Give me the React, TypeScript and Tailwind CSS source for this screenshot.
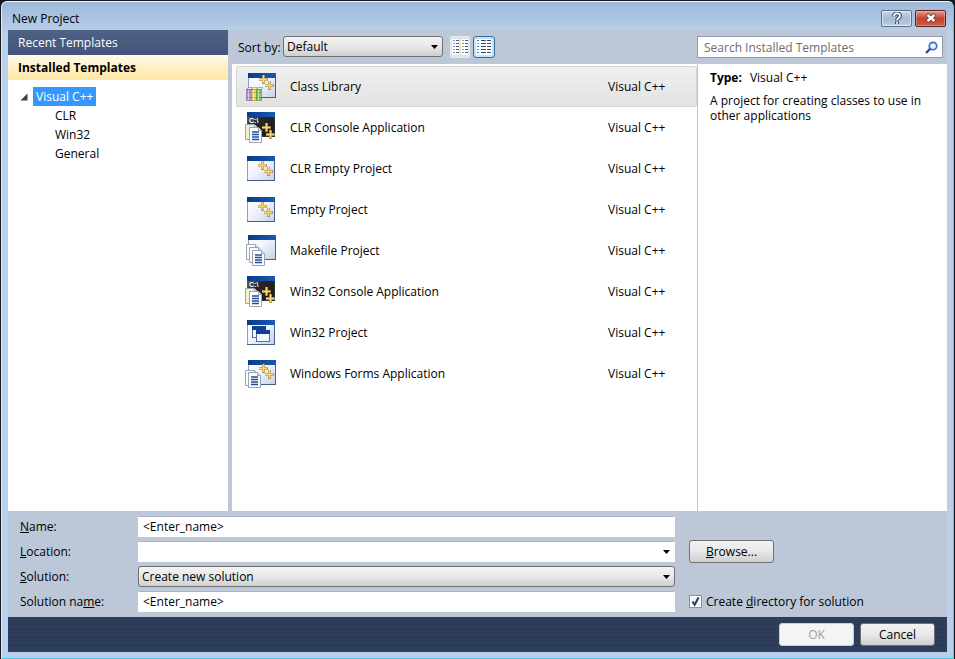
import { useState } from 'react'
import type { ReactNode } from 'react'

// ── Data ────────────────────────────────────────────────────────────────────

type IconKind = 'library' | 'console' | 'empty' | 'makefile' | 'win32' | 'forms'

interface Template {
  name: string
  language: string
  icon: IconKind
}

const TEMPLATES: Template[] = [
  { name: 'Class Library', language: 'Visual C++', icon: 'library' },
  { name: 'CLR Console Application', language: 'Visual C++', icon: 'console' },
  { name: 'CLR Empty Project', language: 'Visual C++', icon: 'empty' },
  { name: 'Empty Project', language: 'Visual C++', icon: 'empty' },
  { name: 'Makefile Project', language: 'Visual C++', icon: 'makefile' },
  { name: 'Win32 Console Application', language: 'Visual C++', icon: 'console' },
  { name: 'Win32 Project', language: 'Visual C++', icon: 'win32' },
  { name: 'Windows Forms Application', language: 'Visual C++', icon: 'forms' },
]

const TREE_CHILDREN = ['CLR', 'Win32', 'General']

// ── Template icons ──────────────────────────────────────────────────────────

function WindowShape({ x, y, dark = false }: { x: number; y: number; dark?: boolean }) {
  return (
    <g transform={`translate(${x} ${y})`}>
      <rect x="0.5" y="0.5" width="27" height="24" fill={dark ? 'url(#console-body)' : 'url(#win-body)'} stroke={dark ? '#555' : '#8ba0c4'} />
      <rect width="28" height="5" fill="url(#win-title)" />
      <path d="M27.5 5v20M0 24.5h28" stroke={dark ? '#333' : '#4a5f88'} />
    </g>
  )
}

function Plus({ x, y }: { x: number; y: number }) {
  return (
    <g transform={`translate(${x} ${y})`}>
      <path d="M.5-4v9M-4 .5h9" stroke="#b08a48" strokeWidth="2.600" />
      <path d="M.5-4v8M-4 .5h8" stroke="#fbd970" strokeWidth="1.400" />
    </g>
  )
}

function Page({ x, y, lines = false, tint = '#fff' }: { x: number; y: number; lines?: boolean; tint?: string }) {
  return (
    <g transform={`translate(${x} ${y})`}>
      <path d="M.5.5h9l3 3v12H.5z" fill={tint} stroke="#98a3b6" />
      <path d="M9.500.5v3h3" fill="#dce5f2" stroke="#98a3b6" />
      {lines && <path d="M3 5h7M3 7.500h7M3 10h7M3 12.500h7" stroke="#1f4f9c" strokeWidth="1.300" />}
    </g>
  )
}

function Book({ x, y, fill, edge }: { x: number; y: number; fill: string; edge: string }) {
  return (
    <g transform={`translate(${x} ${y})`}>
      <path d="M.5 2.500l2-2h4l-1 2z" fill="#eef0e4" stroke={edge} strokeOpacity=".5" />
      <path d="M.5 2.500h5v11h-5z" fill={fill} stroke={edge} strokeOpacity=".5" />
      <path d="M1 5.500h4M1 10.500h4" stroke={edge} strokeOpacity=".5" />
      <path d="M2.500 3v10" stroke="#fff" strokeOpacity=".5" />
    </g>
  )
}

function MiniWindow({ x, y }: { x: number; y: number }) {
  return (
    <g transform={`translate(${x} ${y})`}>
      <rect x=".5" y=".5" width="13" height="11" fill="#f3f6fd" stroke="#5070a8" />
      <rect width="14" height="4" fill="#123f92" />
    </g>
  )
}

const ICONS: Record<IconKind, ReactNode> = {
  library: (
    <>
      <WindowShape x={3} y={2} />
      <Plus x={18} y={8} />
      <Plus x={24} y={14} />
      <Book x={1} y={16} fill="#b497dc" edge="#6b3fa0" />
      <Book x={6} y={16} fill="#ead66a" edge="#94781c" />
      <Book x={11} y={16} fill="#86cc5a" edge="#3f8427" />
    </>
  ),
  console: (
    <>
      <WindowShape x={2} y={0} dark />
      <text x="4" y="11" fontSize="7" fontWeight="bold" fill="#fff" fontFamily="Liberation Sans, sans-serif">C:\</text>
      <Plus x={21} y={15} />
      <Plus x={25} y={22} />
      <Page x={0} y={12} tint="#f8efcf" />
      <Page x={4} y={15} lines />
    </>
  ),
  empty: (
    <>
      <WindowShape x={2} y={3} />
      <Plus x={17} y={12} />
      <Plus x={23} y={18} />
    </>
  ),
  makefile: (
    <>
      <WindowShape x={3} y={0} />
      <Page x={1} y={9} />
      <Page x={4} y={12} />
      <Page x={7} y={15} lines />
    </>
  ),
  win32: (
    <>
      <WindowShape x={2} y={3} />
      <MiniWindow x={7} y={9} />
      <MiniWindow x={11} y={13} />
    </>
  ),
  forms: (
    <>
      <WindowShape x={3} y={2} />
      <Plus x={18} y={10} />
      <Plus x={24} y={16} />
      <Page x={0} y={12} />
      <Page x={3} y={14} lines />
    </>
  ),
}

function TemplateIcon({ kind }: { kind: IconKind }) {
  return (
    <svg viewBox="0 0 32 32" className="size-8 shrink-0" aria-hidden="true">
      <defs>
        <linearGradient id="win-title" x1="0" x2="1">
          <stop offset="0" stopColor="#0a3a86" />
          <stop offset="1" stopColor="#1a5ab4" />
        </linearGradient>
        <linearGradient id="win-body" x1="0" y1="0" x2="1" y2="1">
          <stop offset="0" stopColor="#ffffff" />
          <stop offset="0.5" stopColor="#eef2fb" />
          <stop offset="1" stopColor="#c4d0ea" />
        </linearGradient>
        <linearGradient id="console-body" x1="0" y1="0" x2="1" y2="1">
          <stop offset="0" stopColor="#6a6a6a" />
          <stop offset="0.4" stopColor="#262626" />
          <stop offset="1" stopColor="#1a1a1a" />
        </linearGradient>
      </defs>
      {ICONS[kind]}
    </svg>
  )
}

// ── Toolbar icons ───────────────────────────────────────────────────────────

function SmallIconsGlyph() {
  return (
    <svg viewBox="0 0 16 16" className="size-4" aria-hidden="true">
      <path d="M0 0h7v16H0zM9 0h7v16H9z" fill="#fff" />
      <path d="M1 1.500h2M1 7.500h2M1 13.500h2M10 4.500h2M10 10.500h2" stroke="#6f8fb8" />
      <path d="M1 4.500h2M1 10.500h2M10 1.500h2M10 7.500h2M10 13.500h2" stroke="#b89c4c" />
      <path d="M4 1.500h3M4 4.500h3M4 7.500h3M4 10.500h3M4 13.500h3M13 1.500h3M13 4.500h3M13 7.500h3M13 10.500h3M13 13.500h3" stroke="#4c5878" />
    </svg>
  )
}

function MediumIconsGlyph() {
  return (
    <svg viewBox="0 0 16 16" className="size-4" aria-hidden="true">
      <path d="M0 0h16v16H0z" fill="#fff" />
      <path d="M1 1.500h2M1 7.500h2M1 13.500h2" stroke="#3f72b8" />
      <path d="M1 4.500h2M1 10.500h2" stroke="#c88a4a" />
      <path d="M5 1.500h5M5 4.500h5M5 7.500h5M5 10.500h5M5 13.500h5M11 1.500h4M11 4.500h4M11 7.500h4M11 10.500h4M11 13.500h4" stroke="#34466e" />
    </svg>
  )
}

// ── Form controls ───────────────────────────────────────────────────────────

const RAISED = 'border border-[#707070] rounded-[3px] bg-linear-to-b from-[#f3f3f3] via-[#e8e8e8] via-50% to-[#cfcfcf]'

interface DropDownProps {
  id: string
  className: string
  options: string[]
}

function DropDown({ id, className, options }: DropDownProps) {
  return (
    <div className="relative">
      <select id={id} className={`block w-full appearance-none outline-none ${className}`}>
        {options.map((option) => (
          <option key={option}>{option}</option>
        ))}
      </select>
      <svg viewBox="0 0 7 4" className="pointer-events-none absolute top-[9px] right-[5px] h-1 w-[7px]" aria-hidden="true">
        <path d="M0 0h7L3.500 4z" fill="#000" />
      </svg>
    </div>
  )
}

const FIELD = 'h-[21px] w-full border border-t-[#a9b4c6] border-x-white border-b-white bg-white px-1 outline-none'

// ── Dialog ──────────────────────────────────────────────────────────────────

export default function App() {
  const [selected, setSelected] = useState(0)

  return (
    <div className="flex min-h-screen bg-[#15181f] pt-px pr-px pl-px font-['Open_Sans','Noto_Sans',sans-serif] text-[12px] leading-[15px] text-black">
      <div className="flex flex-1 flex-col rounded-t-md border border-t-[#eef5fc] border-r-[#45cbe6] border-b-[#45cbe6] border-l-[#e4eefa] bg-linear-to-b from-[#9db8d8] to-[#b9cfea] to-[30px] px-1.5 pb-1.5">
        {/* Title bar */}
        <header className="flex h-7 items-center justify-between pr-px pl-1">
          <h1 className="pt-1">New Project</h1>
          <div className="flex gap-[3px] pt-1">
            <button
              aria-label="Help"
              className="flex h-[17px] w-[31px] items-center justify-center rounded-xs border border-[#5d7089] bg-linear-to-b from-[#c8d8ea] via-[#a5bbd4] via-50% to-[#bcd0e6] inset-ring inset-ring-white/50"
            >
              <svg viewBox="0 0 12 13" className="h-[13px] w-3" aria-hidden="true">
                <path d="M3 4.500c0-4 6-4 6-.5 0 2-3 2-3 4.500M6 9.500v2.500" fill="none" stroke="#3f4a5c" strokeWidth="4" />
                <path d="M3 4.500c0-4 6-4 6-.5 0 2-3 2-3 4.300M6 10v1.800" fill="none" stroke="#fff" strokeWidth="1.800" />
              </svg>
            </button>
            <button
              aria-label="Close"
              className="flex h-[17px] w-[31px] items-center justify-center rounded-xs border border-[#5b1f1c] bg-linear-to-b from-[#e0998c] via-[#c4432f] via-50% to-[#cf5a43] inset-ring inset-ring-white/30"
            >
              <svg viewBox="0 0 12 10" className="h-2.5 w-3" aria-hidden="true">
                <path d="M2 1.500l8 7M10 1.500l-8 7" stroke="#5a3b42" strokeWidth="4" />
                <path d="M2.500 2l7 6M9.500 2l-7 6" stroke="#fff" strokeWidth="2.400" />
              </svg>
            </button>
          </div>
        </header>

        <div className="flex flex-1 flex-col bg-[#bcc7d8]">
          <div className="flex flex-1 gap-1">
            {/* Template categories */}
            <aside className="w-[220px] shrink-0 bg-white">
              <button className="block h-[25px] w-full bg-linear-to-b from-[#4f6185] to-[#43557a] px-2.5 text-left text-white">
                Recent Templates
              </button>
              <button className="block h-[25px] w-full bg-linear-to-b from-[#fffaeb] via-[#fff0c4] via-50% to-[#ffe8a6] px-2.5 text-left font-bold">
                Installed Templates
              </button>
              <ul className="pt-[7px] pl-3">
                <li>
                  <div className="flex items-center gap-[5px]">
                    <svg viewBox="0 0 8 8" className="size-2" aria-hidden="true">
                      <path d="M7.500.5v7h-7z" fill="#404040" />
                    </svg>
                    <button className="h-[19px] bg-[#3399ff] px-[3px] text-white">Visual C++</button>
                  </div>
                  <ul className="pl-8">
                    {TREE_CHILDREN.map((child) => (
                      <li key={child}>
                        <button className="block h-[19px] px-[3px]">{child}</button>
                      </li>
                    ))}
                  </ul>
                </li>
              </ul>
            </aside>

            <div className="flex min-w-0 flex-1 flex-col">
              {/* Sort and search */}
              <div className="flex h-[34px] items-start pt-1.5 pr-1 pl-1.5">
                <label htmlFor="sort" className="w-[45px] leading-6">Sort by:</label>
                <div className="w-40">
                  <DropDown id="sort" options={['Default']} className={`h-[21px] px-[3px] ${RAISED}`} />
                </div>
                <button aria-label="Small icons" className="ml-[7px] flex h-[22px] w-5 items-center justify-center rounded-xs border border-[#e6ebf2] bg-white/50">
                  <SmallIconsGlyph />
                </button>
                <button
                  aria-label="Medium icons"
                  aria-pressed="true"
                  className="ml-[3px] flex size-[22px] items-center justify-center rounded-[3px] border border-[#3a6a96] bg-[#c3e2f7]"
                >
                  <MediumIconsGlyph />
                </button>
                <div className="ml-auto flex h-[22px] w-[246px] items-center border border-[#8e9bb0] bg-white pr-1">
                  <input
                    type="text"
                    aria-label="Search Installed Templates"
                    placeholder="Search Installed Templates"
                    className="min-w-0 flex-1 px-1.5 outline-none placeholder:text-[#6d6d6d]"
                  />
                  <button aria-label="Search">
                    <svg viewBox="0 0 13 13" className="size-[13px]" aria-hidden="true">
                      <circle cx="8" cy="5" r="3.700" fill="#eaf3ff" stroke="#3a6fc4" strokeWidth="1.700" />
                      <path d="M5.300 7.700L1 12" stroke="#2a4f9c" strokeWidth="2.400" />
                    </svg>
                  </button>
                </div>
              </div>

              <div className="flex flex-1 bg-white">
                {/* Template list */}
                <ul className="min-w-0 flex-1 pt-0.5 pl-1">
                  {TEMPLATES.map((template, i) => (
                    <li key={template.name}>
                      <button
                        onClick={() => setSelected(i)}
                        className={`flex h-[41px] w-full items-center border pl-2 text-left ${
                          i === selected
                            ? 'rounded-xs border-[#d4d4d4] bg-linear-to-b from-[#f0f0f0] to-[#e2e2e2]'
                            : 'border-transparent'
                        }`}
                      >
                        <TemplateIcon kind={template.icon} />
                        <span className="flex-1 pl-[13px]">{template.name}</span>
                        <span className="w-22">{template.language}</span>
                      </button>
                    </li>
                  ))}
                </ul>

                {/* Description */}
                <section className="w-[250px] shrink-0 border-l border-[#bcc7d8] px-3 pt-1.5">
                  <p className="flex gap-2">
                    <b>Type:</b>
                    <span>Visual C++</span>
                  </p>
                  <p className="pt-2">A project for creating classes to use in other applications</p>
                </section>
              </div>
            </div>
          </div>

          {/* Project settings */}
          <div className="grid grid-cols-[118px_1fr_272px] items-center gap-y-1 pt-[5px] pb-[5px] pl-3">
            <label htmlFor="name"><u>N</u>ame:</label>
            <input id="name" type="text" defaultValue="<Enter_name>" className={FIELD} />
            <span />

            <label htmlFor="location"><u>L</u>ocation:</label>
            <DropDown id="location" options={['']} className={FIELD} />
            <div className="-my-1 pl-3.5">
              <button className={`h-[23px] w-[85px] ${RAISED}`}><u>B</u>rowse...</button>
            </div>

            <label htmlFor="solution"><u>S</u>olution:</label>
            <DropDown id="solution" options={['Create new solution']} className={`h-[21px] px-[3px] ${RAISED}`} />
            <span />

            <label htmlFor="solution-name">Solution na<u>m</u>e:</label>
            <input id="solution-name" type="text" defaultValue="<Enter_name>" className={FIELD} />
            <label className="flex items-center gap-1 pl-3.5">
              <span className="relative flex">
                <input
                  type="checkbox"
                  defaultChecked
                  className="peer size-[13px] appearance-none border border-[#8e8f8f] bg-[#f0f2f4] inset-ring inset-ring-white"
                />
                <svg viewBox="0 0 13 13" className="pointer-events-none absolute inset-0 hidden size-[13px] peer-checked:block" aria-hidden="true">
                  <path d="M3.500 6.500l2.200 3.200L9.500 2.500" fill="none" stroke="#31347c" strokeWidth="2" />
                </svg>
              </span>
              <span>Create <u>d</u>irectory for solution</span>
            </label>
          </div>

          {/* Actions */}
          <footer className="flex h-[35px] items-center justify-end gap-1.5 bg-[#2b3b58] bg-[radial-gradient(#30425f_1px,transparent_1px)] bg-size-[4px_4px] pr-3">
            <button disabled className="h-[23px] w-[75px] rounded-[3px] border border-[#c9cdd3] bg-[#f4f4f4] text-[#a0a0a0]">
              OK
            </button>
            <button className={`h-[23px] w-[75px] ${RAISED}`}>Cancel</button>
          </footer>
        </div>
      </div>
    </div>
  )
}
